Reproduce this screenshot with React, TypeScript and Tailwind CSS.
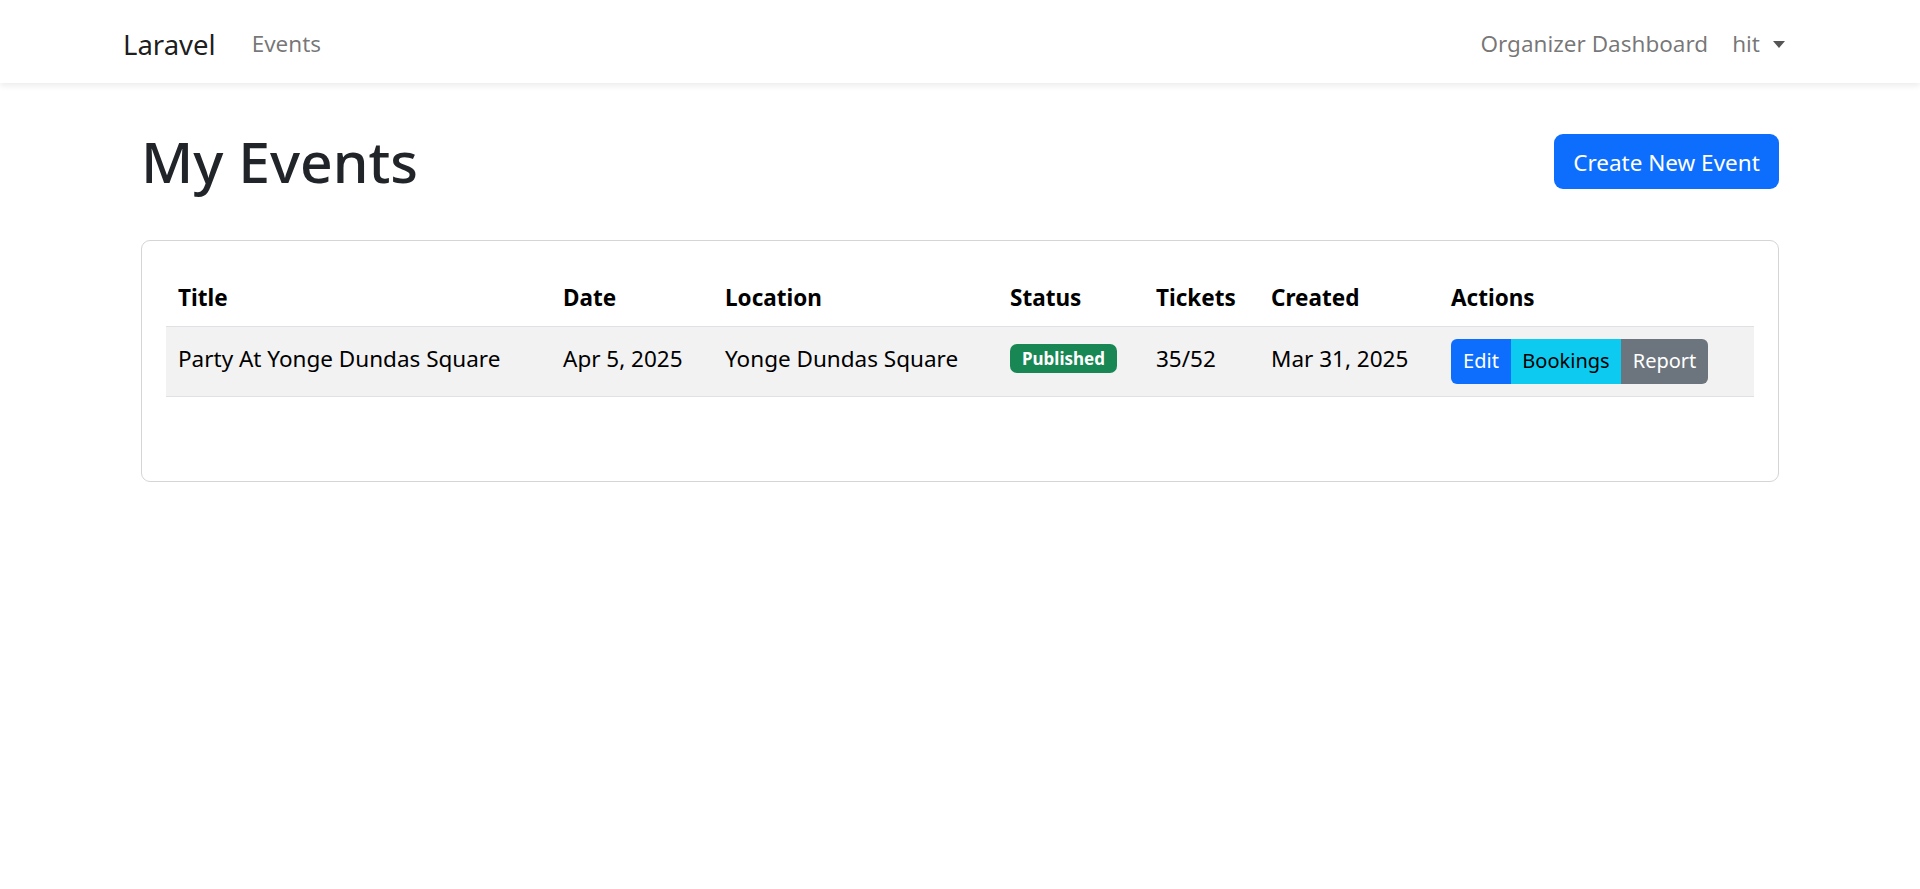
import React from 'react';

const events = [
  {
    title: 'Party At Yonge Dundas Square',
    date: 'Apr 5, 2025',
    location: 'Yonge Dundas Square',
    status: 'Published',
    tickets: '35/52',
    created: 'Mar 31, 2025',
  },
];

export default function App() {
  return (
    <div className="min-h-screen bg-white font-['Noto_Sans',sans-serif] text-[#212529]">
      {/* Navbar */}
      <nav className="h-[83px] bg-white shadow-[0_3px_6px_rgba(0,0,0,0.075)]">
        <div className="mx-auto flex h-full w-[1710px] items-center justify-between px-[18px] pt-[5px]">
          <div className="flex items-center">
            <a href="#" className="mr-6 text-[27.5px] leading-[45px] text-black/90">
              Laravel
            </a>
            <a href="#" className="px-3 text-[22.5px] leading-9 text-black/55">
              Events
            </a>
          </div>
          <div className="flex items-center">
            <a href="#" className="px-3 text-[22.5px] leading-9 text-black/55">
              Organizer Dashboard
            </a>
            <a href="#" className="flex items-center px-3 text-[22.5px] leading-9 text-black/55">
              hit
              <span className="ml-[13px] inline-block h-0 w-0 border-x-[6px] border-t-[7px] border-x-transparent border-t-[#555]" />
            </a>
          </div>
        </div>
      </nav>

      <main className="mx-auto w-[1638px] pt-9">
        {/* Header */}
        <div className="mb-[37px] flex items-center justify-between">
          <h1 className="mb-[6px] pt-[6px] text-[57px] font-medium leading-[72px]">My Events</h1>
          <a
            href="#"
            className="flex h-[55px] w-[225px] items-center justify-center rounded-[9px] bg-[#0d6efd] pt-[3px] text-[22.5px] text-white"
          >
            Create New Event
          </a>
        </div>

        {/* Card */}
        <div className="rounded-[9px] border border-[#d5d5d5] px-6 pt-6 pb-[84px]">
          <table className="w-full border-collapse text-left text-[22.5px] text-black">
            <colgroup>
              <col className="w-[385px]" />
              <col className="w-[162px]" />
              <col className="w-[285px]" />
              <col className="w-[146px]" />
              <col className="w-[115px]" />
              <col className="w-[180px]" />
              <col />
            </colgroup>
            <thead>
              <tr className="h-[61px] border-b-[1.5px] border-[#dee2e6]">
                {['Title', 'Date', 'Location', 'Status', 'Tickets', 'Created', 'Actions'].map((h) => (
                  <th key={h} className="px-3 pt-[5px] align-middle font-bold">
                    {h}
                  </th>
                ))}
              </tr>
            </thead>
            <tbody>
              {events.map((e) => (
                <tr key={e.title} className="h-[70px] border-b-[1.5px] border-[#dee2e6] bg-[#f2f2f2]">
                  <td className="px-3 pb-[5px] align-middle">{e.title}</td>
                  <td className="px-3 pb-[5px] align-middle">{e.date}</td>
                  <td className="px-3 pb-[5px] align-middle">{e.location}</td>
                  <td className="px-3 align-middle">
                    <div className="flex pb-[6px]">
                      <span className="inline-flex h-[29px] w-[107px] items-center justify-center rounded-[7px] bg-[#198754] pt-[2px] text-[17px] font-bold text-white">
                        {e.status}
                      </span>
                    </div>
                  </td>
                  <td className="px-3 pb-[5px] align-middle">{e.tickets}</td>
                  <td className="px-3 pb-[5px] align-middle">{e.created}</td>
                  <td className="px-3 align-middle">
                    <div className="flex h-[45px] w-fit overflow-hidden rounded-[6px] text-[20px]">
                      <a href="#" className="flex w-[60px] items-center justify-center bg-[#0d6efd] text-white">
                        Edit
                      </a>
                      <a href="#" className="flex w-[110px] items-center justify-center bg-[#0dcaf0] text-black">
                        Bookings
                      </a>
                      <a href="#" className="flex w-[87px] items-center justify-center bg-[#6c757d] text-white">
                        Report
                      </a>
                    </div>
                  </td>
                </tr>
              ))}
            </tbody>
          </table>
        </div>
      </main>
    </div>
  );
}
